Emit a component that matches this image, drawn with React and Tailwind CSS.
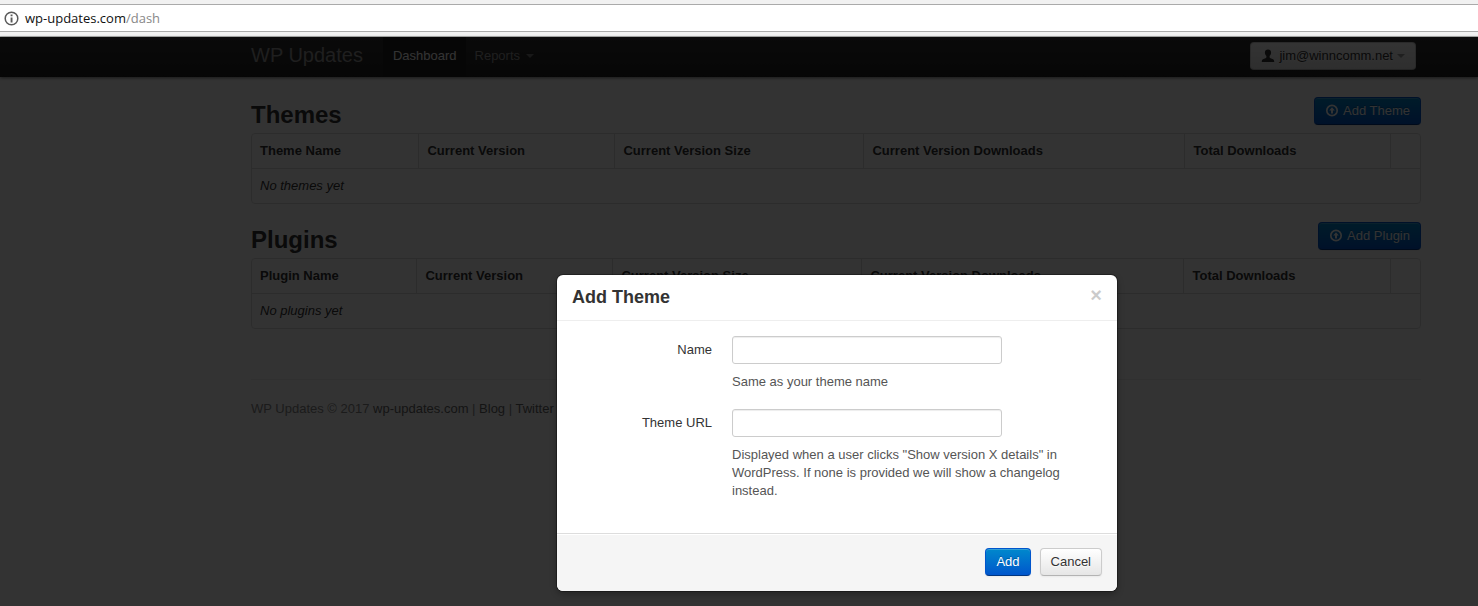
import React from "react";

const TABLES = [
  {
    title: "Themes",
    action: "Add Theme",
    first: "Theme Name",
    empty: "No themes yet",
    cols: [167, 196, 249, 321, 206, 29],
  },
  {
    title: "Plugins",
    action: "Add Plugin",
    first: "Plugin Name",
    empty: "No plugins yet",
    cols: [165, 196, 249, 322, 207, 29],
  },
];

const PRIMARY =
  "rounded-[4px] border border-[#0055cc] border-b-[#003580] bg-linear-to-b from-[#0088cc] to-[#0055cc] text-white shadow-[inset_0_1px_0_rgba(255,255,255,0.2),0_1px_2px_rgba(0,0,0,0.05)] [text-shadow:0_-1px_0_rgba(0,0,0,0.25)]";
const PLAIN =
  "rounded-[4px] border border-[#cccccc] border-b-[#b3b3b3] bg-linear-to-b from-white to-[#e6e6e6] text-[#333333] shadow-[inset_0_1px_0_rgba(255,255,255,0.2),0_1px_2px_rgba(0,0,0,0.05)] [text-shadow:0_1px_1px_rgba(255,255,255,0.75)]";

function Caret({ className }) {
  return (
    <svg className={className} width="8" height="4" viewBox="0 0 8 4" aria-hidden="true">
      <path d="M0 0h8L4 4z" fill="currentColor" />
    </svg>
  );
}

function UploadIcon() {
  return (
    <svg width="14" height="14" viewBox="0 0 14 14" aria-hidden="true">
      <circle cx="7" cy="6.500" r="5.200" fill="none" stroke="currentColor" strokeWidth="1.700" />
      <path d="M7 3.200 9.800 6.400H8v3.100H6V6.400H4.200z" fill="currentColor" />
    </svg>
  );
}

function UserIcon() {
  return (
    <svg width="14" height="14" viewBox="0 0 14 14" aria-hidden="true">
      <path
        d="M7 .5c1.900 0 3.100 1.200 3.100 3.100 0 1.500-.6 2.700-1.500 3.500v1.200c0 .5.300.8.900 1 1.900.6 3.700 1.100 3.700 3v.7H.8v-.7c0-1.900 1.800-2.400 3.700-3 .6-.2.900-.5.900-1V7.100C4.500 6.300 3.900 5.100 3.900 3.600 3.900 1.700 5.100.5 7 .5z"
        fill="currentColor"
      />
    </svg>
  );
}

function AddressBar() {
  return (
    <div className="border-b border-[#aeb1ae] bg-[#f1f1f1] py-1">
      <div className="flex h-7 items-center gap-1.5 border-y border-[#aaaaaa] bg-white px-1">
        <svg width="15" height="15" viewBox="0 0 15 15" aria-hidden="true">
          <circle cx="7.500" cy="7.500" r="6.300" fill="none" stroke="#5a5a5a" strokeWidth="1.500" />
          <path d="M6.600 3.600h1.900v1.700H6.600zM6.600 6.500h1.900v4.900H6.600z" fill="#5a5a5a" />
        </svg>
        <span className="font-['Open_Sans','Noto_Sans',sans-serif] text-[13px] text-[#111111]">
          wp-updates.com<span className="text-[#888888]">/dash</span>
        </span>
      </div>
    </div>
  );
}

function Navbar() {
  return (
    <nav className="flex h-10 items-center bg-linear-to-b from-[#333333] to-[#222222] pr-[62px] pl-[251px] text-[#999999] shadow-[0_1px_3px_rgba(0,0,0,0.5)]">
      <a href="#home" className="mr-5 pb-1 text-[20px] leading-5">
        WP Updates
      </a>
      <a
        href="#dashboard"
        className="flex h-full items-center bg-[#202020] pr-[9px] pb-0.5 pl-[10px] text-white"
      >
        Dashboard
      </a>
      <a href="#reports" className="flex h-full items-center gap-[6px] px-[9px] pb-0.5">
        Reports
        <Caret className="text-[#777777]" />
      </a>
      <button
        type="button"
        className={`mb-0.5 ml-auto flex h-7 items-center gap-1 px-[10px] ${PLAIN}`}
      >
        <UserIcon />
        jim@winncomm.net
        <Caret className="text-[#999999]" />
      </button>
    </nav>
  );
}

function Listing({ title, action, first, empty, cols }) {
  const total = cols.reduce((sum, w) => sum + w, 0);
  const heads = [
    first,
    "Current Version",
    "Current Version Size",
    "Current Version Downloads",
    "Total Downloads",
  ];
  return (
    <section className="mb-[18px]">
      <div className="flex h-9 items-start justify-between">
        <h2 className="text-[24px] leading-9 font-bold">{title}</h2>
        <button type="button" className={`flex h-7 items-center gap-1 px-[10px] ${PRIMARY}`}>
          <UploadIcon />
          {action}
        </button>
      </div>
      <div className="rounded-[4px] border border-[#dddddd]">
        <table className="w-full table-fixed border-collapse text-left">
          <colgroup>
            {cols.map((w, i) => (
              <col key={i} style={{ width: `${(w / total) * 100}%` }} />
            ))}
          </colgroup>
          <thead>
            <tr>
              {heads.map((h) => (
                <th
                  key={h}
                  className="border-l border-[#dddddd] px-2 py-2 leading-[18px] font-bold first:border-l-0"
                >
                  {h}
                </th>
              ))}
              <td className="border-l border-[#dddddd]" />
            </tr>
          </thead>
          <tbody>
            <tr>
              <td colSpan={6} className="border-t border-[#dddddd] px-2 py-2 leading-[18px] italic">
                {empty}
              </td>
            </tr>
          </tbody>
        </table>
      </div>
    </section>
  );
}

function Field({ id, label, help }) {
  return (
    <div className="mb-[18px] flex gap-5">
      <label htmlFor={id} className="w-[140px] shrink-0 pt-[5px] text-right">
        {label}
      </label>
      <div className="min-w-0 flex-1">
        <input
          id={id}
          type="text"
          className="block h-7 w-[270px] max-w-full rounded-[3px] border border-[#cccccc] bg-white px-1 shadow-[inset_0_1px_1px_rgba(0,0,0,0.075)]"
        />
        <p className="mt-[9px] text-[#555555]">{help}</p>
      </div>
    </div>
  );
}

function Modal() {
  return (
    <div
      role="dialog"
      aria-labelledby="modal-title"
      className="w-[560px] overflow-hidden rounded-[6px] bg-white shadow-[0_0_0_1px_rgba(0,0,0,0.3),0_3px_7px_rgba(0,0,0,0.3)]"
    >
      <header className="flex items-start justify-between border-b border-[#eeeeee] px-[15px] py-[9px]">
        <h3 id="modal-title" className="text-[18px] leading-[27px] font-bold">
          Add Theme
        </h3>
        <button
          type="button"
          aria-label="Close"
          className="mt-0.5 text-[20px] leading-[18px] font-bold text-black opacity-20"
        >
          ×
        </button>
      </header>
      <form className="px-[15px] py-[15px]">
        <Field id="theme-name" label="Name" help="Same as your theme name" />
        <Field
          id="theme-url"
          label="Theme URL"
          help={
            'Displayed when a user clicks "Show version X details" in WordPress. If none is provided we will show a changelog instead.'
          }
        />
      </form>
      <footer className="flex justify-end gap-[9px] border-t border-[#dddddd] bg-[#f5f5f5] px-[15px] pt-[14px] pb-[15px] shadow-[inset_0_1px_0_#ffffff]">
        <button type="submit" className={`h-7 px-[10px] ${PRIMARY}`}>
          Add
        </button>
        <button type="button" className={`h-7 px-[10px] ${PLAIN}`}>
          Cancel
        </button>
      </footer>
    </div>
  );
}

export default function App() {
  return (
    <div className="flex min-h-screen flex-col bg-white font-['Liberation_Sans',Arial,sans-serif] text-[13px] leading-[18px] text-[#333333]">
      <AddressBar />
      <div className="relative flex-1">
        <Navbar />
        <main className="pt-5 pr-[57px] pl-[251px]">
          {TABLES.map((t) => (
            <Listing key={t.title} {...t} />
          ))}
          <footer className="mt-[50px] border-t border-[#eeeeee] pt-5 text-[#888888] [&>a]:text-[#666666]">
            WP Updates © 2017 <a href="#site">wp-updates.com</a> | <a href="#blog">Blog</a> |{" "}
            <a href="#twitter">Twitter</a>
          </footer>
        </main>
        <div className="absolute inset-0 flex items-start justify-center bg-black/80 pt-[238px] pl-[196px]">
          <Modal />
        </div>
      </div>
    </div>
  );
}
